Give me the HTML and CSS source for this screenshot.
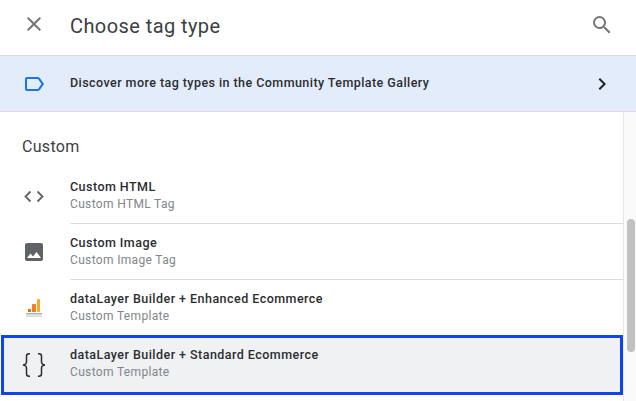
FILE: index.html
```html
<!DOCTYPE html>
<html lang="en">
<head>
<meta charset="utf-8">
<title>Choose tag type</title>
<link rel="stylesheet" href="styles.css">
</head>
<body>
<header class="header">
  <div class="icon-cell">
    <svg class="close" width="24" height="24" viewBox="0 0 24 24"><path d="M19 6.41 17.59 5 12 10.59 6.41 5 5 6.41 10.59 12 5 17.59 6.41 19 12 13.41 17.59 19 19 17.59 13.41 12z"/></svg>
  </div>
  <h1 class="title">Choose tag type</h1>
  <svg class="search" width="24" height="24" viewBox="0 0 24 24"><path d="M15.5 14h-.79l-.28-.27A6.47 6.47 0 0 0 16 9.5 6.5 6.5 0 1 0 9.5 16c1.61 0 3.09-.59 4.23-1.57l.27.28v.79l5 4.99L20.49 19l-4.99-5zm-6 0C7.01 14 5 11.99 5 9.5S7.01 5 9.5 5 14 7.01 14 9.5 11.99 14 9.5 14z"/></svg>
</header>
<section class="banner">
  <div class="icon-cell">
    <svg width="24" height="24" viewBox="0 0 24 24"><path class="tag" d="M17.63 5.84C17.27 5.33 16.67 5 16 5L5 5.01C3.9 5.01 3 5.9 3 7v10c0 1.1.9 1.99 2 1.99L16 19c.67 0 1.27-.33 1.63-.84L22 12l-4.37-6.16zM16 17H5V7h11l3.55 5L16 17z"/></svg>
  </div>
  <span class="banner-text">Discover more tag types in the Community Template Gallery</span>
  <svg class="chevron" width="24" height="24" viewBox="0 0 24 24"><path d="M10 6 8.59 7.41 13.17 12l-4.58 4.59L10 18l6-6z"/></svg>
</section>
<div class="content">
  <main class="list">
    <h2 class="section-title">Custom</h2>
    <div class="row">
      <div class="icon-cell">
        <svg width="24" height="24" viewBox="0 0 24 24"><path class="code-stroke" d="M8.500 7.500 3.500 12.500l5 5M15.500 7.500l5 5-5 5"/></svg>
      </div>
      <div class="row-text">
        <div class="name">Custom HTML</div>
        <div class="sub">Custom HTML Tag</div>
      </div>
    </div>
    <div class="row">
      <div class="icon-cell">
        <svg width="24" height="24" viewBox="0 0 24 24"><path class="grey" d="M21 19V5c0-1.100-.9-2-2-2H5c-1.100 0-2 .9-2 2v14c0 1.100.9 2 2 2h14c1.100 0 2-.9 2-2zM8.500 13.500l2.500 3.010L14.500 12l4.500 6H5l3.500-4.500z"/></svg>
      </div>
      <div class="row-text">
        <div class="name">Custom Image</div>
        <div class="sub">Custom Image Tag</div>
      </div>
    </div>
    <div class="row">
      <div class="icon-cell">
        <svg width="24" height="24" viewBox="0 0 24 24">
          <rect x="6" y="13" width="3" height="3" fill="#e8710a"/>
          <rect x="10" y="8" width="4" height="8" rx="0.500" fill="#ee7f2d"/>
          <rect x="15" y="3" width="3" height="13" rx="1" fill="#f9a825"/>
          <rect x="4" y="17" width="16" height="1.500" fill="#b0b0b0"/>
          <rect x="4" y="19.500" width="16" height="1.200" fill="#cccccc"/>
        </svg>
      </div>
      <div class="row-text">
        <div class="name">dataLayer Builder + Enhanced Ecommerce</div>
        <div class="sub">Custom Template</div>
      </div>
    </div>
    <div class="row selected">
      <div class="icon-cell">
        <svg width="24" height="24" viewBox="0 0 24 24"><path class="brace-stroke" d="M8 .8H7C5.300.8 4.500 1.800 4.500 3.300v5.400c0 1.700-1 3-3.500 3.300 2.500.3 3.500 1.600 3.500 3.300v5.400c0 1.500.8 2.500 2.500 2.500h1M16 .8h1c1.700 0 2.500 1 2.500 2.500v5.400c0 1.700 1 3 3.500 3.300-2.500.3-3.500 1.600-3.500 3.300v5.400c0 1.500-.8 2.500-2.500 2.500h-1"/></svg>
      </div>
      <div class="row-text">
        <div class="name">dataLayer Builder + Standard Ecommerce</div>
        <div class="sub">Custom Template</div>
      </div>
    </div>
  </main>
  <aside class="track"><div class="thumb"></div></aside>
</div>
</body>
</html>
```
FILE: styles.css
```css
* { box-sizing: border-box; }
html, body { margin: 0; height: 100%; overflow: hidden; }
body {
  width: 636px;
  height: 401px;
  background: #fff;
  font-family: Roboto, "Liberation Sans", sans-serif;
  color: #202124;
  display: flex;
  flex-direction: column;
}
.icon-cell {
  width: 70px;
  flex: none;
  display: flex;
  justify-content: flex-start;
  padding-left: 22px;
}
.header {
  height: 56px;
  flex: none;
  display: flex;
  align-items: center;
  border-bottom: 1px solid #dadce0;
  padding-right: 22px;
}
.close, .search { fill: #757575; }
.close { position: relative; top: -4px; }
.title {
  flex: 1;
  margin: 0;
  font-size: 20px;
  font-weight: 400;
  line-height: 28px;
  letter-spacing: 0.42px;
  color: #3c4043;
  position: relative;
  top: -2px;
}
.search { position: relative; top: -3px; }
.banner {
  height: 56px;
  flex: none;
  display: flex;
  align-items: center;
  background: #e3ecfb;
  border-bottom: 1px solid #dadce0;
  padding-right: 22px;
}
.tag { fill: #1a73e8; }
.banner-text {
  flex: 1;
  font-size: 12.5px;
  font-weight: 500;
  letter-spacing: 0.44px;
  color: #2b2d30;
  position: relative;
  top: -1px;
}
.chevron { fill: #202124; }
.content {
  flex: 1;
  display: flex;
  min-height: 0;
}
.list { flex: 1; min-width: 0; }
.section-title {
  margin: 0;
  height: 56px;
  padding: 25px 0 0 22px;
  font-size: 16px;
  line-height: 20px;
  font-weight: 400;
  letter-spacing: 0.3px;
  color: #3c4043;
}
.row {
  height: 56px;
  display: flex;
  align-items: center;
}
.row-text {
  flex: 1;
  height: 100%;
  padding-top: 11px;
  border-bottom: 1px solid #dadce0;
}
.row:nth-of-type(3) .row-text { border-bottom: 0; }
.name {
  font-size: 12.5px;
  line-height: 16px;
  font-weight: 500;
  letter-spacing: 0.46px;
  color: #2b2d30;
}
.sub {
  margin-top: 0.500px;
  font-size: 12px;
  line-height: 16px;
  letter-spacing: 0.34px;
  color: #80868b;
}
.grey { fill: #5f6368; }
.code-stroke, .brace-stroke { fill: none; }
.code-stroke { stroke: #5f6368; stroke-width: 1.800; }
.brace-stroke { stroke: #2b2d30; stroke-width: 1.500; }
.selected {
  height: 60px;
  margin: -1px 0 0 1px;
  background: #f0f1f3;
  border: 3px solid #0f43ec;
}
.selected .icon-cell { width: 66px; padding-left: 18px; }
.selected .row-text { border-bottom: 0; padding-top: 9px; }
.track {
  width: 13px;
  flex: none;
  background: #fafafa;
  border-left: 1px solid #e6e6e6;
  padding: 107px 1px 0 3px;
}
.thumb {
  height: 133px;
  border-radius: 4px;
  background: #c1c1c1;
}
```
